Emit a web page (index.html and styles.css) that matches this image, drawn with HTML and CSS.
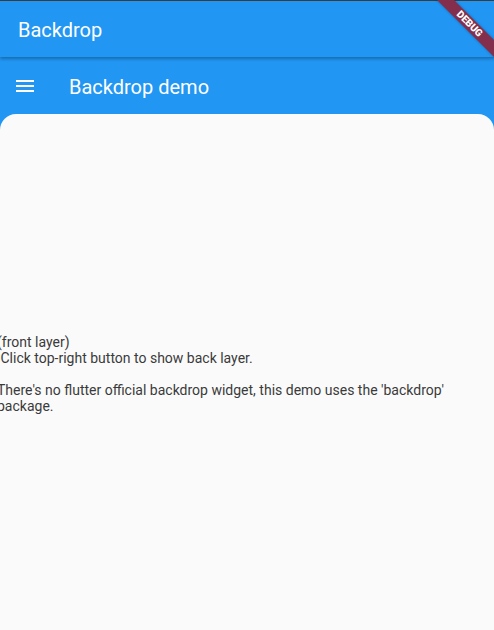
FILE: index.html
```html
<!DOCTYPE html>
<html lang="en">
<head>
    <meta charset="UTF-8">
    <meta name="viewport" content="width=device-width, initial-scale=1.0">
    <title>Backdrop</title>
    <link rel="stylesheet" href="styles.css">
</head>
<body>
    <div class="status-bar"></div>
    <header class="app-bar">
        <h1>Backdrop</h1>
    </header>
    <div class="backdrop">
        <div class="back-bar">
            <svg class="menu-icon" width="18" height="12" viewBox="0 0 18 12">
                <rect x="0" y="0" width="18" height="2" fill="#fff"/>
                <rect x="0" y="5" width="18" height="2" fill="#fff"/>
                <rect x="0" y="10" width="18" height="2" fill="#fff"/>
            </svg>
            <h2>Backdrop demo</h2>
        </div>
        <main class="front-layer">
            <p class="front-text">(front layer)<br>&nbsp;Click top-right button to show back layer.<br><br>There's no flutter official backdrop widget, this demo uses the 'backdrop'<br>package.</p>
        </main>
    </div>
    <!-- banner de debug -->
    <div class="debug-banner">DEBUG</div>
</body>
</html>
```

FILE: styles.css
```css
html, body {
    height: 100%;
}
body {
    font-family: Roboto, "Noto Sans", sans-serif;
    margin: 0;
    padding: 0;
    background-color: #2196f3;
    display: flex;
    flex-direction: column;
    overflow: hidden;
}
.status-bar {
    height: 1px;
    background-color: #3d3d3d;
}
.app-bar {
    height: 56px;
    display: flex;
    align-items: center;
    padding-left: 18px;
    background-color: #2196f3;
    box-shadow: 0 2px 3px rgba(0, 0, 0, 0.28);
    position: relative;
    z-index: 2;
}
.app-bar h1 {
    margin: 2px 0 0;
    font-size: 20px;
    font-weight: 400;
    color: white;
}
.backdrop {
    flex: 1;
    display: flex;
    flex-direction: column;
}
.back-bar {
    height: 57px;
    display: flex;
    align-items: center;
    color: white;
}
.menu-icon {
    margin-left: 16px;
    margin-top: 1px;
}
.back-bar h2 {
    margin: 2px 0 0 35px;
    font-size: 20px;
    font-weight: 400;
}
.front-layer {
    flex: 1;
    background-color: #fafafa;
    border-radius: 16px 16px 0 0;
    display: flex;
    align-items: center;
    overflow: hidden;
}
.front-text {
    margin: 4px 0 0 -3px;
    font-size: 14px;
    line-height: 16px;
    color: #3a3a3a;
    white-space: nowrap;
}
.debug-banner {
    position: absolute;
    z-index: 10;
    left: 421px;
    top: 18px;
    width: 97px;
    height: 12px;
    line-height: 12px;
    transform: rotate(45deg);
    background-color: #832e4c;
    color: white;
    font-size: 10px;
    font-weight: 900;
    text-align: center;
    box-shadow: 0 0 3px rgba(0, 0, 0, 0.3);
}
```
